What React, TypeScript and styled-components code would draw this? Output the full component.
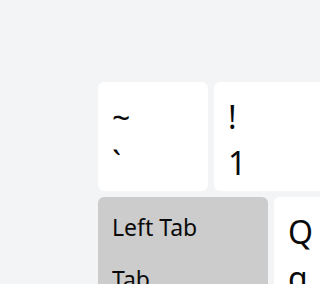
import styled, { createGlobalStyle } from "styled-components";

const GlobalStyle = createGlobalStyle`
  html, body {
    margin: 0;
    padding: 0;
    background-color: #f3f4f6;
    font-family: "Noto Sans", "Open Sans", sans-serif;
    overflow: hidden;
  }
`;

const Page = styled.div`
  width: 312px;
  height: 284px;
  padding: 82px 0 0 98px;
  box-sizing: border-box;
`;

const Keyboard = styled.div`
  display: flex;
  flex-direction: column;
  gap: 6px;
`;

const Row = styled.div`
  display: flex;
  gap: 6px;
`;

const Key = styled.div<{ $width: number; $pressed?: boolean; $gap?: number }>`
  flex: 0 0 auto;
  width: ${(props) => props.$width}px;
  height: 109px;
  box-sizing: border-box;
  padding: 12px 14px;
  display: flex;
  flex-direction: column;
  gap: ${(props) => props.$gap ?? 0}px;
  border-radius: 6px;
  color: #0a0a0a;
  background-color: ${(props) => (props.$pressed ? "#cccccc" : "#ffffff")};
`;

const Legend = styled.span<{ $small?: boolean }>`
  display: block;
  white-space: nowrap;
  font-size: ${(props) => (props.$small ? 23 : 32)}px;
  line-height: ${(props) => (props.$small ? 36 : 46)}px;
`;

type KeyType = {
  shift: string;
  base: string;
  width: number;
  small?: boolean;
  pressed?: boolean;
};

const rows: KeyType[][] = [
  [
    { shift: "~", base: "`", width: 110 },
    { shift: "!", base: "1", width: 110 },
  ],
  [
    { shift: "Left Tab", base: "Tab", width: 170, small: true, pressed: true },
    { shift: "Q", base: "q", width: 110 },
  ],
];

function App() {
  return (
    <>
      <GlobalStyle />
      <Page>
        <Keyboard>
          {rows.map((row, i) => (
            <Row key={i}>
              {row.map((k) => (
                <Key key={k.base} $width={k.width} $pressed={k.pressed} $gap={k.small ? 16 : 0}>
                  <Legend $small={k.small}>{k.shift}</Legend>
                  <Legend $small={k.small}>{k.base}</Legend>
                </Key>
              ))}
            </Row>
          ))}
        </Keyboard>
      </Page>
    </>
  );
}

export default App;
